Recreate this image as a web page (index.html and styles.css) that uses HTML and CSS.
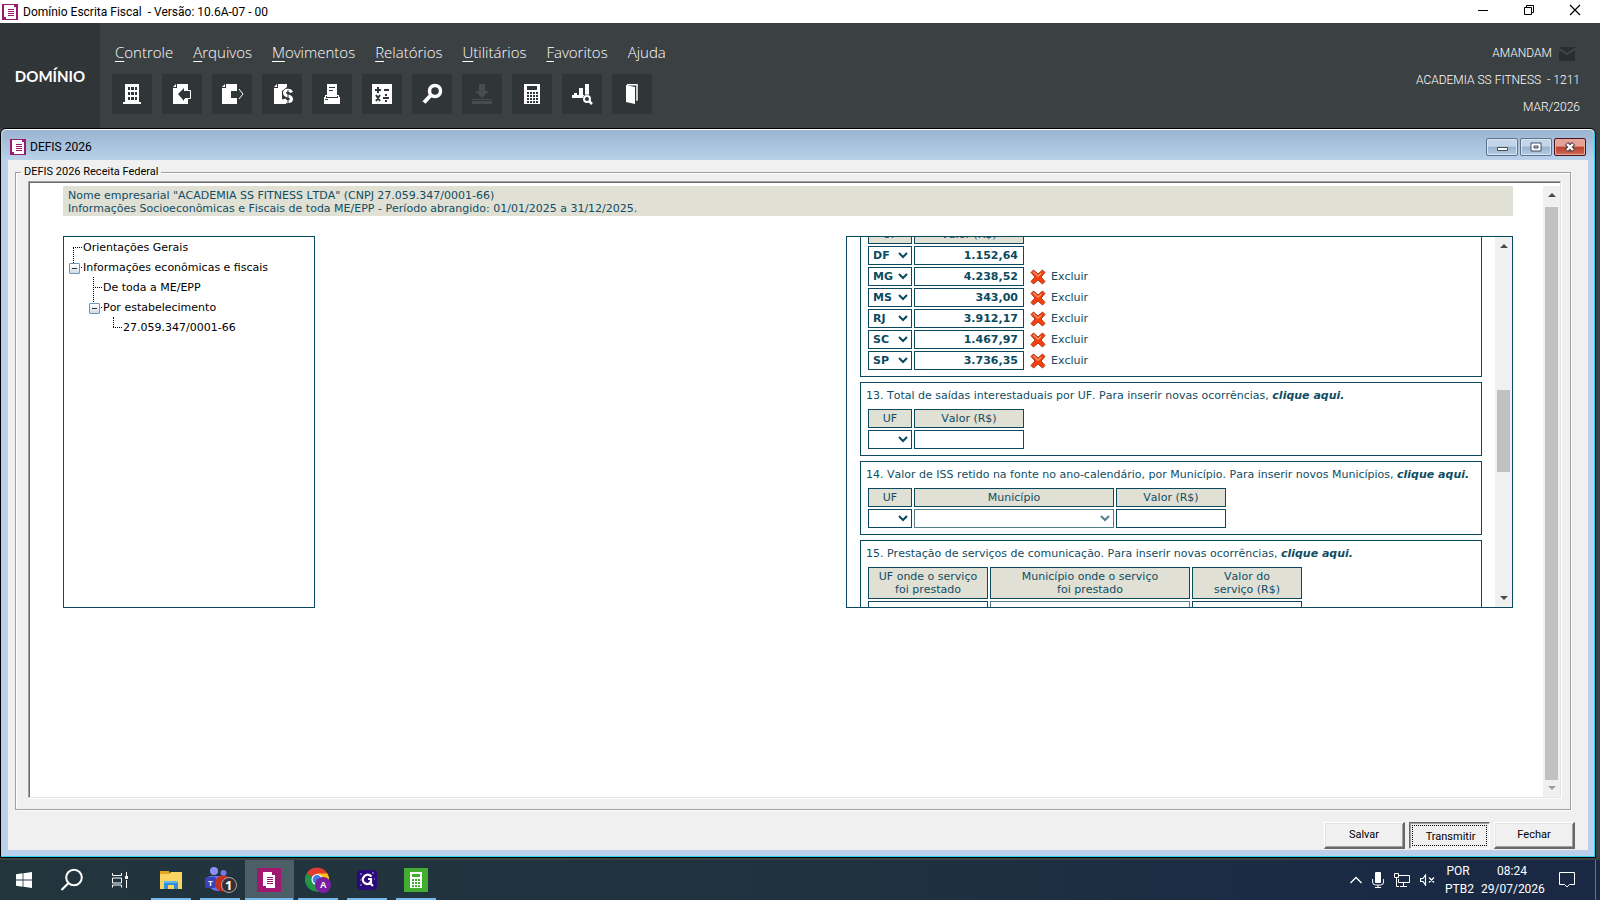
FILE: index.html
```html
<!DOCTYPE html>
<html lang="pt-BR">
<head>
<meta charset="utf-8">
<title>Domínio Escrita Fiscal</title>
<link rel="stylesheet" href="styles.css">
</head>
<body>
<svg class="defs" aria-hidden="true">
  <symbol id="doc" viewBox="0 0 16 16"><path fill="#9b1a6e" d="M0 0h16v16H0z"/><path fill="#fff" d="M2 1h10v2h2v12H4v-2H2z"/><path fill="#9b1a6e" d="M12 1h1v2h-1zM2 13h2v2H2zM6 5h6v1H6zM6 7h6v1H6zM6 9h6v1H6zM6 11h6v1H6z"/></symbol>
  <symbol id="del" viewBox="0 0 16 16"><path d="M3.500 1 8 5l4.500-4 2.500 2.500L11 8l4 4.500-2.500 2.500L8 11l-4.500 4L1 12.500 5 8 1 3.500z" fill="#fb3f0c" stroke="#a83a24" stroke-width="1" stroke-linejoin="round"/><path d="m3.300 2.800 4.700 4.400 3-3" stroke="#ff9a6c" stroke-width="1.300" fill="none"/></symbol>
  <symbol id="up" viewBox="0 0 8 4"><path d="M4 0 8 4H0z" fill="currentColor"/></symbol>
  <symbol id="down" viewBox="0 0 8 4"><path d="M0 0h8L4 4z" fill="currentColor"/></symbol>
</svg>

<header class="titlebar">
  <svg class="doc-icon"><use href="#doc"/></svg>
  <h1>Domínio Escrita Fiscal &nbsp;- Versão: 10.6A-07 - 00</h1>
  <div class="sys">
    <button type="button" aria-label="Minimizar"><svg viewBox="0 0 12 12"><path d="M1 6.500h10" stroke="#000"/></svg></button>
    <button type="button" aria-label="Restaurar"><svg viewBox="0 0 12 12"><path d="M1.500 3.500h7v7h-7zM3.500 3V1.500h7v7H9" stroke="#000" fill="none"/></svg></button>
    <button type="button" aria-label="Fechar programa"><svg viewBox="0 0 12 12"><path d="m1 1 10 10M11 1 1 11" stroke="#000" stroke-width="1.200"/></svg></button>
  </div>
</header>

<section class="top">
  <div class="logo">DOMÍNIO</div>
  <div class="nav">
    <nav class="menu">
      <a href="#"><u>C</u>ontrole</a><a href="#"><u>A</u>rquivos</a><a href="#"><u>M</u>ovimentos</a><a href="#"><u>R</u>elatórios</a><a href="#"><u>U</u>tilitários</a><a href="#"><u>F</u>avoritos</a><a href="#">Ajuda</a>
    </nav>
    <div class="tools">
      <button type="button" aria-label="Empresas"><svg viewBox="0 0 20 20"><path fill="#fff" fill-rule="evenodd" d="M3 0h14v18h2v2H1v-2h2zM6 3v3h2V3zm3 0v3h3V3zm4 0v3h2V3zM6 8v3h2V8zm3 0v3h3V8zm4 0v3h2V8zM6 13v3h2v-3zm3 0v3h3v-3zm4 0v3h2v-3z"/></svg></button>
      <button type="button" aria-label="Entradas"><svg viewBox="0 0 20 20"><path fill="#fff" d="M5 0h11v20H1V4h4z"/><path fill="#fff" d="M1 3 4 0v3z"/><path fill="#303537" d="m6 10 6-6v3h8v8h-8v2z"/><path fill="none" stroke="#fff" d="M16 6.500h2.500v8H13"/></svg></button>
      <button type="button" aria-label="Saídas"><svg viewBox="0 0 20 20"><path fill="#fff" d="M4 0h11v20H0V4h4z"/><path fill="#fff" d="M0 3 3 0v3z"/><path fill="#303537" d="M9 7h6V3l7 7-7 7v-3H9z"/><path fill="none" stroke="#fff" d="m17 5 4 5-4 5"/></svg></button>
      <button type="button" aria-label="Serviços"><svg viewBox="0 0 20 20"><path fill="#fff" d="M6 0h9v3l-5 4v8l4 3v2H2V4h4z"/><path fill="#fff" d="M2 3 5 0v3z"/><path fill="none" stroke="#fff" stroke-width="3" d="M19.500 8.500c-1-3-7-3-7 .5 0 4 7 2 7 6 0 3-6 4-7.500 0"/><path fill="none" stroke="#303537" d="M16 6v13"/></svg></button>
      <button type="button" aria-label="Imprimir"><svg viewBox="0 0 20 20"><path fill="#fff" fill-rule="evenodd" d="M5 0h10v11h2v2h1v7H2v-7h1v-2h2zM7 3v1h6V3zm0 3v1h4V6zM4 12v2h12v-2h-1v1H5v-1zm-1 3v1h3v-1z"/></svg></button>
      <button type="button" aria-label="Cálculo"><svg viewBox="0 0 20 20"><path fill="#fff" d="M0 0h20v20H0z"/><path stroke="#303537" stroke-width="2" d="M3 6h6M6 3v6M12 6h5M11 14h6M4 11l4 6M8 11l-4 6M13 11h2M13 17h2"/></svg></button>
      <button type="button" aria-label="Pesquisar"><svg viewBox="0 0 20 20"><circle cx="13" cy="7" r="5.500" stroke="#fff" stroke-width="3.500" fill="none"/><path d="m9 11-7 7.500" stroke="#fff" stroke-width="4"/></svg></button>
      <button type="button" aria-label="Importar" disabled><svg viewBox="0 0 20 20"><path fill="#484d4f" d="M7 0h6v7h4l-7 7-7-7h4zM0 15h20v1H0zM0 17h20v3H0z"/></svg></button>
      <button type="button" aria-label="Calculadora"><svg viewBox="0 0 20 20"><path fill="#fff" d="M2 0h16v20H2z"/><path fill="#303537" d="M5 2h10v4H5z"/><path stroke="#303537" stroke-width="2" stroke-dasharray="2 1" d="M5 9h11M5 12h11M5 15h11M5 18h11"/></svg></button>
      <button type="button" aria-label="Gráficos"><svg viewBox="0 0 20 20"><path fill="#fff" d="M0 11h2V9h3v2h2V4h4v7h2V0h4v11h-5v3H0z"/><circle cx="15" cy="15" r="4.500" fill="#303537"/><circle cx="15" cy="15" r="3" stroke="#fff" stroke-width="2" fill="none"/><path d="m17 17 3 3" stroke="#fff" stroke-width="2.500"/></svg></button>
      <button type="button" aria-label="Sair"><svg viewBox="0 0 20 20"><path fill="#fff" d="m4 1 9 2v17l-9-2z"/><path fill="none" stroke="#fff" stroke-width="1.500" d="M5 .8h10v16"/></svg></button>
    </div>
  </div>
  <div class="user">
    <p>AMANDAM <svg class="mail" viewBox="0 0 16 14"><path fill="#292e30" d="M0 0h16v14H0z"/><path d="m0 2 8 5 8-5" stroke="#42474a" fill="none" stroke-width="1.500"/></svg></p>
    <p>ACADEMIA SS FITNESS &nbsp;- 1211</p>
    <p>MAR/2026</p>
  </div>
</section>

<main class="mdi">
  <div class="window">
    <div class="window-title">
      <svg class="doc-icon"><use href="#doc"/></svg>
      <h2>DEFIS 2026</h2>
      <div class="wbtns">
        <button type="button" aria-label="Minimizar janela"><svg viewBox="0 0 12 10"><path d="M1.500 5.500h10v3h-10z" fill="#fff" stroke="#444d5c"/></svg></button>
        <button type="button" aria-label="Maximizar janela"><svg viewBox="0 0 12 10"><path d="M1 1h10v8H1z" fill="#fff" stroke="#444d5c"/><path d="M4 4h4v2H4z" fill="#b4cce4" stroke="#444d5c"/></svg></button>
        <button type="button" class="close" aria-label="Fechar janela"><svg viewBox="0 0 12 10"><path d="m2.500 1.500 7 7m0-7-7 7" stroke="#4c3a44" stroke-width="4.500"/><path d="m3 2 6 6m0-6-6 6" stroke="#fff" stroke-width="2.400"/></svg></button>
      </div>
    </div>
    <div class="window-body">
      <fieldset class="group">
        <legend>DEFIS 2026 Receita Federal</legend>
        <div class="view">
          <div class="page">
            <div class="banner">
              <p>Nome empresarial "ACADEMIA SS FITNESS LTDA" (CNPJ 27.059.347/0001-66)</p>
              <p>Informações Socioeconômicas e Fiscais de toda ME/EPP - Período abrangido: 01/01/2025 a 31/12/2025.</p>
            </div>
            <div class="cols">
              <ul class="tree">
                <li class="leaf first">Orientações Gerais</li>
                <li class="open">Informações econômicas e fiscais
                  <ul>
                    <li class="leaf">De toda a ME/EPP</li>
                    <li class="open">Por estabelecimento
                      <ul><li class="leaf last">27.059.347/0001-66</li></ul>
                    </li>
                  </ul>
                </li>
              </ul>
              <div class="panel">
                <div class="sections">
                  <section class="sec scrolled">
                    <table>
                      <thead><tr><th class="uf">UF</th><th class="val">Valor (R$)</th></tr></thead>
                      <tbody>
                      <tr><td><select aria-label="UF"><option>DF</option></select></td><td><input aria-label="Valor DF" value="1.152,64"></td></tr>
                      <tr><td><select aria-label="UF"><option>MG</option></select></td><td><input aria-label="Valor MG" value="4.238,52"></td><td><a class="del" href="#"><svg><use href="#del"/></svg>Excluir</a></td></tr>
                      <tr><td><select aria-label="UF"><option>MS</option></select></td><td><input aria-label="Valor MS" value="343,00"></td><td><a class="del" href="#"><svg><use href="#del"/></svg>Excluir</a></td></tr>
                      <tr><td><select aria-label="UF"><option>RJ</option></select></td><td><input aria-label="Valor RJ" value="3.912,17"></td><td><a class="del" href="#"><svg><use href="#del"/></svg>Excluir</a></td></tr>
                      <tr><td><select aria-label="UF"><option>SC</option></select></td><td><input aria-label="Valor SC" value="1.467,97"></td><td><a class="del" href="#"><svg><use href="#del"/></svg>Excluir</a></td></tr>
                      <tr><td><select aria-label="UF"><option>SP</option></select></td><td><input aria-label="Valor SP" value="3.736,35"></td><td><a class="del" href="#"><svg><use href="#del"/></svg>Excluir</a></td></tr>
                      </tbody>
                    </table>
                  </section>
                  <section class="sec">
                    <p>13. Total de saídas interestaduais por UF. Para inserir novas ocorrências, <a href="#">clique aqui.</a></p>
                    <table>
                      <thead><tr><th class="uf">UF</th><th class="val">Valor (R$)</th></tr></thead>
                      <tbody><tr><td><select aria-label="UF"><option></option></select></td><td><input aria-label="Valor (R$)"></td></tr></tbody>
                    </table>
                  </section>
                  <section class="sec">
                    <p>14. Valor de ISS retido na fonte no ano-calendário, por Município. Para inserir novos Municípios, <a href="#">clique aqui.</a></p>
                    <table>
                      <thead><tr><th class="uf">UF</th><th class="mun">Município</th><th class="val">Valor (R$)</th></tr></thead>
                      <tbody><tr><td><select aria-label="UF"><option></option></select></td><td><select aria-label="Município" disabled><option></option></select></td><td><input aria-label="Valor (R$)"></td></tr></tbody>
                    </table>
                  </section>
                  <section class="sec">
                    <p>15. Prestação de serviços de comunicação. Para inserir novas ocorrências, <a href="#">clique aqui.</a></p>
                    <table>
                      <thead><tr><th class="ufs">UF onde o serviço<br>foi prestado</th><th class="mun">Município onde o serviço<br>foi prestado</th><th class="val">Valor do<br>serviço (R$)</th></tr></thead>
                      <tbody><tr><td><select aria-label="UF"><option></option></select></td><td><select aria-label="Município" disabled><option></option></select></td><td><input aria-label="Valor do serviço"></td></tr></tbody>
                    </table>
                  </section>
                </div>
                <div class="scroll inner"><svg><use href="#up"/></svg><div class="track"><div class="thumb"></div></div><svg><use href="#down"/></svg></div>
              </div>
            </div>
          </div>
          <div class="scroll outer"><svg><use href="#up"/></svg><div class="track"><div class="thumb"></div></div><svg class="off"><use href="#down"/></svg></div>
        </div>
      </fieldset>
      <div class="actions">
        <button type="button">Salvar</button>
        <button type="button" class="pressed">Transmitir</button>
        <button type="button">Fechar</button>
      </div>
    </div>
  </div>
</main>

<footer class="taskbar">
  <div class="shell">
    <button type="button" aria-label="Iniciar"><svg width="16" height="16" viewBox="0 0 16 16"><path fill="#fff" d="m0 2.200 6.600-.9v6.300H0zM7.400 1.200 16 0v7.600H7.400zM0 8.400h6.600v6.300L0 13.800zM7.400 8.400H16V16l-8.600-1.200z"/></svg></button>
    <button type="button" aria-label="Pesquisar no Windows"><svg width="24" height="24" viewBox="0 0 24 24"><circle cx="14" cy="9.500" r="7.800" stroke="#fff" stroke-width="2" fill="none"/><path d="m8.500 15-7 7" stroke="#fff" stroke-width="2.200"/></svg></button>
    <button type="button" aria-label="Visão de tarefas"><svg width="18" height="16" viewBox="0 0 18 16"><path d="M1.500 1v2.500h9V1M1.500 6h9v5h-9zM1.500 15.500V13h9v2.500M15.500 0v4M15.500 8v8" stroke="#fff" fill="none"/><path fill="#fff" d="M14 4h3v3h-3z"/></svg></button>
  </div>
  <div class="apps">
    <button type="button" aria-label="Explorador"><svg width="24" height="24" viewBox="0 0 24 24"><path fill="#e5a51c" d="M1 3h9l1 3H1z"/><path fill="#fcd462" d="M1 6h9l2-2h11v17H1z"/><path fill="#2f8fdc" d="M5 13h14v8h-4v-4H9v4H5z"/><path fill="#5cb8f2" d="M5 13h14v2H5z"/></svg></button>
    <button type="button" aria-label="Teams"><svg width="34" height="30" viewBox="0 0 34 30"><circle cx="11" cy="6" r="4" fill="#8a90f5"/><circle cx="20.500" cy="8" r="3" fill="#7378e8"/><path fill="#6a71ec" d="M5 13q0-2 2-2h16q2 0 2 2v5q-2 8-10 8T5 18z"/><rect x="2" y="12" width="11" height="11" rx="2" fill="#3942b8"/><circle cx="20" cy="18.500" r="8" fill="#c52f20"/><circle cx="26" cy="20" r="7.500" fill="#392e32" stroke="#aaa" stroke-width="1"/><text x="5" y="21" fill="#fff" class="t8">T</text><text x="22" y="25" fill="#fff" class="t13">1</text></svg></button>
    <button type="button" class="active" aria-label="Domínio"><svg width="24" height="24" viewBox="0 0 24 24"><path fill="#a01870" d="M0 0h24v24H0z"/><path fill="#fff" d="M6 4h9v3h3v13H9v-2H6z"/><path d="M10 9.500h6M10 11.500h6M10 13.500h6M10 15.500h6" stroke="#a01870"/></svg></button>
    <button type="button" aria-label="Chrome"><svg width="26" height="26" viewBox="0 0 26 26"><path fill="#e33b2e" d="M1.600 6.500A12 12 0 0 1 22.400 6.500L12 13z"/><path fill="#23934a" d="M1.600 6.500a12 12 0 0 0 10.400 18l5-9-5-3z"/><path fill="#fbc116" d="M22.400 6.500a12 12 0 0 1-10.400 18l5-12-5-6z"/><circle cx="12" cy="12.500" r="5.500" fill="#fff"/><circle cx="12" cy="12.500" r="4.400" fill="#3e7de8"/><circle cx="18" cy="18" r="8" fill="#7b1fa2"/><text x="15" y="21" fill="#fff" class="t9">A</text></svg></button>
    <button type="button" aria-label="Assistente"><svg width="20" height="20" viewBox="0 0 20 20"><rect width="20" height="20" rx="4" fill="#2a0a78"/><path d="M14.500 6.500Q11 3 7.500 6q-3.500 4 0 7 4 2.500 6.500-.5V9h-3M12 12l4 4" stroke="#fff" stroke-width="2.200" fill="none"/><path d="M3 4h2M3 10h1M3 15h2M15 3h2M17 9h1" stroke="#b6a5ef"/></svg></button>
    <button type="button" aria-label="Calculadora fiscal"><svg width="24" height="24" viewBox="0 0 24 24"><path fill="#43ad2f" d="M0 0h24v24H0z"/><path fill="#fff" d="M6 4h12v16H6z"/><path fill="#43ad2f" d="M8 6h8v3H8z"/><path stroke="#43ad2f" stroke-width="2" stroke-dasharray="2 1" d="M8 12h8M8 15h8M8 18h8"/></svg></button>
  </div>
  <div class="tray">
    <svg width="12" height="8" viewBox="0 0 12 8"><path d="m.5 7 5.500-5.500L11.500 7" stroke="#fff" stroke-width="1.300" fill="none"/></svg>
    <svg width="12" height="16" viewBox="0 0 12 16"><rect x="3" width="6" height="11" rx="1" fill="#fff"/><path d="M.6 7v3q0 3 3 3h5q3 0 3-3V7M6 13v2.500M3 15.500h6" stroke="#fff" fill="none"/></svg>
    <svg width="16" height="14" viewBox="0 0 16 14"><path d="M5 2.500h10.500v7H4.500V6M9.500 10v3M6 13.500h7M.5.5h4v4h-4zM2.500 5v8.500H5" stroke="#fff" fill="none"/></svg>
    <svg width="15" height="12" viewBox="0 0 15 12"><path d="M.5 4.500H3L5.500 1v10L3 7.500H.5zM9 3.500l5 5m0-5-5 5" stroke="#fff" stroke-width="1.200" fill="none"/></svg>
    <div class="stack lang"><span>POR</span><span>PTB2</span></div>
    <div class="stack clock"><span>08:24</span><span>29/07/2026</span></div>
    <svg width="16" height="16" viewBox="0 0 16 16"><path d="M.5.500h15v12h-5L8 15l-2.500-2.500h-5z" stroke="#fff" fill="none"/></svg>
  </div>
</footer>
</body>
</html>
```
FILE: styles.css
```css
* { box-sizing: border-box; }
body, h1, h2, p, ul, fieldset { margin: 0; padding: 0; }
body {
  min-height: 100vh;
  display: flex;
  flex-direction: column;
  background: #3b4042;
  font: 12px/16px "Open Sans", "Noto Sans", sans-serif;
  color: #000;
}
button, input, select { font: inherit; margin: 0; }
.defs { position: absolute; width: 0; height: 0; }
.doc-icon { width: 16px; height: 16px; flex: none; }

.titlebar {
  height: 23px;
  background: #fff;
  display: flex;
  align-items: center;
  padding: 0 2px;
  gap: 5px;
}
.titlebar h1, .window-title h2 { font: 12px/16px Roboto, sans-serif; }
.sys { margin-left: auto; display: flex; }
.sys button {
  width: 46px;
  height: 23px;
  padding: 0 0 3px;
  border: 0;
  background: none;
  display: flex;
  align-items: center;
  justify-content: center;
}
.sys svg { width: 12px; height: 12px; }

.top { display: flex; height: 105px; background: #3b4042; color: #fff; }
.logo {
  width: 100px;
  display: flex;
  align-items: center;
  justify-content: center;
  background: #303537;
  font: bold 15px/20px Lato, sans-serif;
}
.nav { padding: 17px 0 0 12px; }
.menu { display: flex; gap: 20px; padding: 0 3px; }
.menu a { color: #fff; font: 300 15px/24px "Open Sans", sans-serif; text-decoration: none; }
.menu u { text-underline-offset: 3px; }
.tools { display: flex; gap: 10px; margin-top: 10px; }
.tools button {
  width: 40px;
  height: 40px;
  padding: 0;
  border: 0;
  background: #303537;
  display: flex;
  align-items: center;
  justify-content: center;
}
.tools svg { width: 20px; height: 20px; overflow: visible; }
.user {
  margin-left: auto;
  padding: 17px 20px 0 0;
  text-align: right;
  font: 300 12px/27px Roboto, sans-serif;
}
.user p:first-child { padding-right: 5px; display: flex; justify-content: flex-end; align-items: center; gap: 7px; }
.mail { width: 16px; height: 14px; }

.mdi { flex: 1; display: flex; padding: 0 4px 2px 0; background: #3b4042; }
.window {
  flex: 1;
  display: flex;
  flex-direction: column;
  border: 1px solid #000;
  border-radius: 6px 6px 0 0;
  background: #b9d1ea;
  box-shadow: inset -1px -1px #2bd3f0, inset 0 1px #fff;
  padding: 1px 7px 7px 7px;
}
.window-title {
  height: 30px;
  margin: 0 -6px;
  padding: 4px 8px 0;
  display: flex;
  align-items: center;
  gap: 4px;
  background: linear-gradient(#99b4d1, #b9d1ea);
  border-radius: 5px 5px 0 0;
}
.wbtns { margin-left: auto; display: flex; gap: 2px; }
.wbtns button {
  width: 32px;
  height: 18px;
  padding: 0;
  border: 1px solid #5d7189;
  border-radius: 2px;
  background: linear-gradient(#c3d6e9 45%, #98b3cf 50%, #b5cde5);
  box-shadow: inset 0 0 0 1px #d8e6f3;
  display: flex;
  align-items: center;
  justify-content: center;
}
.wbtns .close { border-color: #4b1320; background: linear-gradient(#e6a296 45%, #b9402b 50%, #cc6b55); box-shadow: inset 0 0 0 1px #e7aca0; }
.wbtns svg { width: 12px; height: 10px; }

.window-body { flex: 1; display: flex; flex-direction: column; background: #f0f0f0; padding: 5px 17px 1px 7px; }
.group {
  flex: 1;
  min-width: 0;
  display: flex;
  flex-direction: column;
  border: 1px solid #a0a0a0;
  box-shadow: 1px 1px #fff, inset 1px 1px #fff;
  padding: 2px 9px 11px 12px;
}
.group legend { margin-left: -7px; padding: 0 3px; font: 11px/14px Roboto, sans-serif; }
.view {
  flex: 1;
  display: flex;
  background: #fff;
  border: 1px solid #a0a0a0;
  border-right-color: #e3e3e3;
  border-bottom-color: #e3e3e3;
  box-shadow: inset 1px 1px #696969, 1px 1px #fff;
}
.page { flex: 1; min-width: 0; padding: 4px 30px 20px 34px; color: #104d63; font: 11px/13px "DejaVu Sans", Verdana, sans-serif; font-kerning: none; }
.banner { background: #e0e0d5; padding: 3px 5px 1px; min-height: 30px; }
.cols { display: flex; justify-content: space-between; margin-top: 20px; }

.tree {
  width: 252px;
  height: 372px;
  border: 1px solid #0b4a5e;
  padding: 1px 0 0 9px;
  color: #000;
}
.tree, .tree ul { list-style: none; }
.tree ul { padding-left: 20px; margin-left: -10px; }
.tree li { position: relative; line-height: 20px; padding-left: 10px; }
.tree li::before {
  content: "";
  position: absolute;
  left: 0;
  top: 9px;
  width: 9px;
  border-top: 1px dotted #000;
}
.tree li::after { content: ""; position: absolute; left: 0; top: 0; height: 16px; border-left: 1px dotted #000; }
.tree .first::after { top: 9px; }
.tree .last::after { height: 10px; top: -1px; }
.tree .open::after {
  left: -4px;
  top: 5px;
  width: 9px;
  height: 9px;
  border: 1px solid #6f93b5;
  border-radius: 1px;
  background: linear-gradient(#333, #333) center / 5px 1px no-repeat, linear-gradient(#fff, #cfdce8);
}
.tree .leaf:not(.last):not(.first)::after { height: 25px; top: -1px; }

.panel { width: 667px; height: 372px; border: 1px solid #0b4a5e; display: flex; overflow: hidden; }
.sections { flex: 1; min-width: 0; padding: 0 13px; }
.sec { border: 1px solid #0b4a5e; padding: 6px 5px 4px; margin-bottom: 5px; }
.sec.scrolled { margin-top: -21px; }
.sec p { padding-bottom: 5px; white-space: nowrap; }
.sec a { color: inherit; text-decoration: none; font-weight: bold; font-style: italic; }
table { border-collapse: separate; border-spacing: 2px; }
th, td { padding: 0; }
th { border: 1px solid #0b4a5e; background: #e0e0d5; font-weight: normal; padding: 2px 0; line-height: 13px; height: 19px; }
.uf { width: 44px; }
.val { width: 110px; }
.mun { width: 200px; }
.ufs { width: 120px; }
td select, td input {
  display: block;
  width: 100%;
  height: 19px;
  border: 1px solid #0b4a5e;
  border-radius: 0;
  background-color: #fff;
  color: #0b4a5e;
  font-weight: bold;
}
td select { padding: 0; }
td input { text-align: right; padding: 0 5px; }
td select:disabled { opacity: 0.7; }
.sec .del { display: flex; align-items: center; gap: 5px; padding-left: 4px; font-weight: normal; font-style: normal; }
.del svg { width: 16px; height: 16px; }

.scroll { width: 17px; background: #f0f0f0; display: flex; flex-direction: column; align-items: center; justify-content: space-between; padding: 7px 0; color: #4a4a4a; }
.scroll svg { width: 8px; height: 4px; flex: none; }
.scroll .off { color: #a0a0a0; }
.track { flex: 1; width: 13px; margin: 10px 0 6px; }
.thumb { background: #c1c1c1; }
.inner .track { padding-top: 132px; }
.inner .thumb { height: 82px; }
.outer { margin-top: 4px; }
.outer .thumb { height: 100%; }

.actions { display: flex; justify-content: flex-end; gap: 4px; padding: 12px 0 0; margin-right: -4px; }
.actions button {
  width: 81px;
  height: 27px;
  background: #f0f0f0;
  border: 1px solid #fff;
  border-right: 2px solid #696969;
  border-bottom: 2px solid #696969;
  box-shadow: inset 1px 1px #e3e3e3, inset -1px -1px #a0a0a0;
  font: 11px/14px Roboto, sans-serif;
  padding: 0;
}
.actions .pressed {
  border: 1px solid #696969;
  border-right-color: #fff;
  border-bottom-color: #fff;
  box-shadow: inset 1px 1px #a0a0a0;
  outline: 1px dotted #000;
  outline-offset: -4px;
  padding: 2px 0 0 2px;
}

.taskbar { height: 40px; display: flex; background: linear-gradient(90deg, #22353d, #20323f 50%, #1b2b44 80%, #1a2843); color: #fff; }
.taskbar button { border: 0; padding: 0; background: none; display: flex; align-items: center; justify-content: center; }
.shell, .apps { display: flex; }
.shell { margin-right: 3px; }
.shell button { width: 48px; }
.apps button { width: 49px; padding-right: 1px; background: linear-gradient(#76b9ed, #76b9ed) 4px 100% / 40px 2px no-repeat; }
.apps .active { background: linear-gradient(#76b9ed, #76b9ed) 0 100% / 48px 2px no-repeat, #4c5f67; }
.t8 { font: bold 8px "Liberation Sans", sans-serif; }
.t9 { font: bold 9px "Liberation Sans", sans-serif; }
.t13 { font: bold 13px "Open Sans", sans-serif; }
.tray { margin: 0 4px 0 auto; padding-right: 20px; border-right: 1px solid #67728a; display: flex; align-items: center; gap: 10px; }
.stack { display: flex; flex-direction: column; text-align: center; font: 12px/18px Roboto, sans-serif; }
.lang { width: 26px; }
.clock { width: 62px; margin-right: 6px; }
```
